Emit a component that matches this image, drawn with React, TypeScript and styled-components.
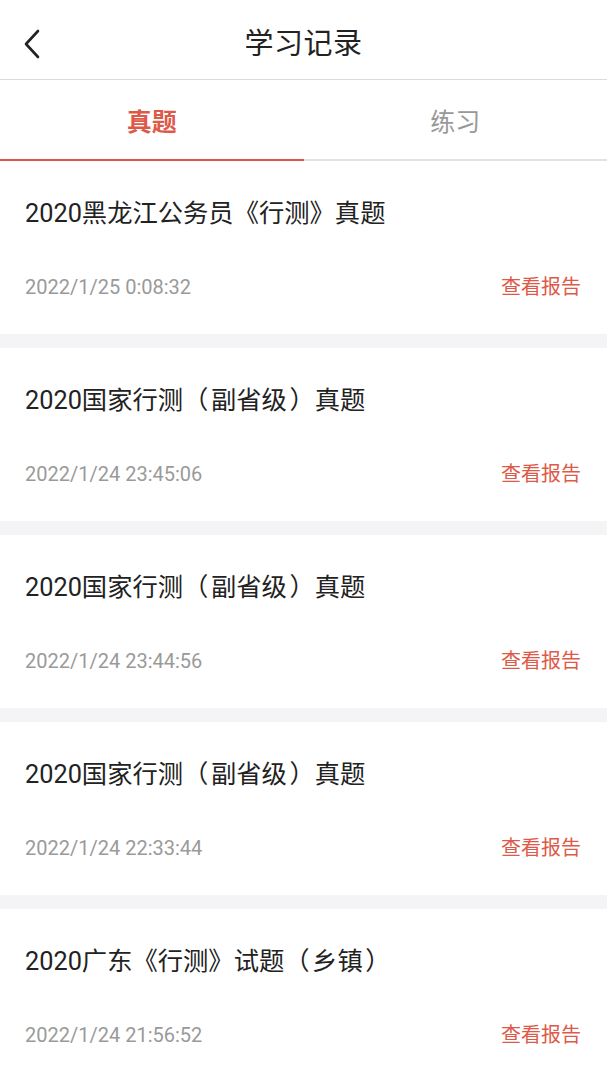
import styled, { createGlobalStyle } from "styled-components";

const GlobalStyle = createGlobalStyle`
  * {
    box-sizing: border-box;
  }
  body {
    margin: 0;
    background: #f4f4f6;
    font-family: Roboto, "Noto Sans CJK SC", sans-serif;
  }
`;

const Page = styled.div`
  width: 607px;
  min-height: 1080px;
  background: #f4f4f6;
`;

const Header = styled.header`
  position: relative;
  display: flex;
  align-items: center;
  justify-content: center;
  height: 80px;
  padding-top: 3px;
  background: #fff;
  border-bottom: 1px solid #dcdcdc;
`;

const BackButton = styled.button`
  position: absolute;
  left: 18px;
  top: 27px;
  width: 30px;
  height: 34px;
  padding: 0;
  border: none;
  background: none;
  svg {
    display: block;
  }
`;

const Title = styled.h1`
  margin: 0;
  font-size: 29px;
  font-weight: 400;
  color: #222;
  letter-spacing: 0.5px;
`;

const Tabs = styled.nav`
  display: flex;
  height: 81px;
  background: #fff;
  border-bottom: 2px solid #e2e2e2;
`;

const Tab = styled.div<{ $active?: boolean }>`
  flex: 1;
  display: flex;
  align-items: center;
  justify-content: center;
  font-size: 25px;
  font-weight: ${({ $active }) => ($active ? 700 : 400)};
  color: ${({ $active }) => ($active ? "#de5a48" : "#999")};
  margin-bottom: -2px;
  border-bottom: 2px solid ${({ $active }) => ($active ? "#d9574a" : "transparent")};
`;

const List = styled.ul`
  list-style: none;
  margin: 0;
  padding: 0;
  display: flex;
  flex-direction: column;
  gap: 14px;
`;

const Card = styled.li`
  background: #fff;
  height: 173px;
  padding: 37px 26px 0 25px;
`;

const CardTitle = styled.div`
  font-size: 25.3px;
  line-height: 32px;
  color: #222;
`;

const Meta = styled.div`
  display: flex;
  justify-content: space-between;
  align-items: center;
  margin-top: 43px;
`;

const Time = styled.span`
  font-size: 20px;
  line-height: 28px;
  color: #9a9a9a;
`;

const ReportLink = styled.a`
  font-size: 20px;
  line-height: 28px;
  color: #de5a48;
  text-decoration: none;
`;

const records = [
  { title: "2020黑龙江公务员《行测》真题", time: "2022/1/25 0:08:32" },
  { title: "2020国家行测（\u200a副省级\u200a）真题", time: "2022/1/24 23:45:06" },
  { title: "2020国家行测（\u200a副省级\u200a）真题", time: "2022/1/24 23:44:56" },
  { title: "2020国家行测（\u200a副省级\u200a）真题", time: "2022/1/24 22:33:44" },
  { title: "2020广东《行测》试题（\u200a乡镇\u200a）", time: "2022/1/24 21:56:52" },
];

const App = () => {
  return (
    <Page>
      <GlobalStyle />
      <Header>
        <BackButton aria-label="返回">
          <svg width="30" height="34" viewBox="0 0 30 34" fill="none">
            <path
              d="M20 4L8 17l12 13"
              stroke="#222"
              strokeWidth="2.6"
              strokeLinecap="round"
              strokeLinejoin="round"
            />
          </svg>
        </BackButton>
        <Title>学习记录</Title>
      </Header>
      <Tabs>
        <Tab $active>真题</Tab>
        <Tab>练习</Tab>
      </Tabs>
      <List>
        {records.map((r, i) => (
          <Card key={i}>
            <CardTitle>{r.title}</CardTitle>
            <Meta>
              <Time>{r.time}</Time>
              <ReportLink href="#">查看报告</ReportLink>
            </Meta>
          </Card>
        ))}
      </List>
    </Page>
  );
};

export default App;
